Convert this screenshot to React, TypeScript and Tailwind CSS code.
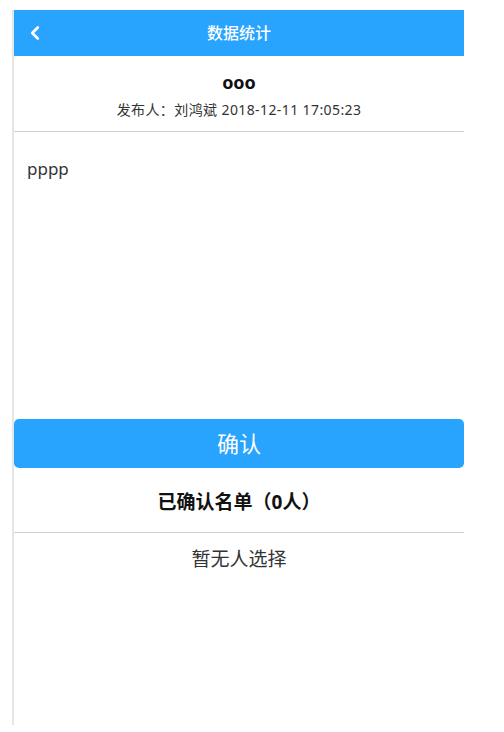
import React from "react";
import { ChevronLeft } from "lucide-react";

const font = "font-['Noto_Sans','Noto_Sans_CJK_SC',sans-serif]";

export default function App() {
  return (
    <div className={`min-h-[732px] bg-white pt-[10px] pl-[12px] ${font}`}>
      <div className="w-[452px] h-[715px] border-l-2 border-[#e6e6e6] flex flex-col">
        <header className="relative h-[46px] bg-[#28a4ff] flex items-center justify-center">
          <ChevronLeft className="absolute left-[10px] top-[12px] h-[22px] w-[22px] text-white" strokeWidth={3} />
          <h1 className="text-[16px] font-medium text-white">数据统计</h1>
        </header>

        <div className="pt-[13px] pb-[11px] border-b border-[#cfcfcf] flex flex-col items-center gap-[5px]">
          <div className="text-[18px] leading-[26px] font-bold text-[#111]">ooo</div>
          <div className="text-[14px] leading-[20px] tracking-[0.4px] text-[#333]">发布人：刘鸿斌 2018-12-11 17:05:23</div>
        </div>

        <div className="h-[287px] pl-[13px] pt-[25px] text-[17px] leading-[24px] text-[#333]">pppp</div>

        <button className="h-[49px] w-full rounded-[5px] bg-[#28a4ff] text-[22px] text-white">确认</button>

        <div className="pt-[20px] pb-[16px] border-b border-[#cfcfcf] text-center text-[19px] leading-[28px] font-bold text-[#111]">
          已确认名单（0人）
        </div>
        <div className="pt-[12px] text-center text-[19px] leading-[28px] text-[#333]">暂无人选择</div>
      </div>
    </div>
  );
}
